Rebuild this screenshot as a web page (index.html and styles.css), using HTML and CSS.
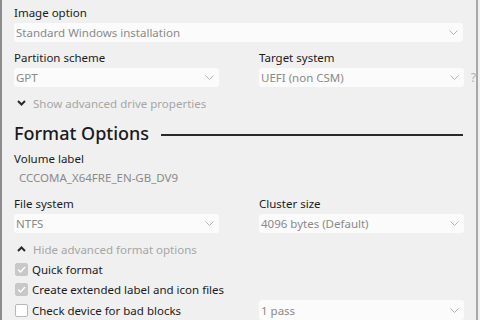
FILE: index.html
```html
<!DOCTYPE html>
<html lang="en">
  <head>
    <meta charset="UTF-8" />
    <meta name="viewport" content="width=device-width, initial-scale=1.0" />
    <title>Drive Properties</title>
    <link rel="stylesheet" href="styles.css">
  </head>
  <body>
    <div class="window">
      <div class="label first">Image option</div>
      <div class="select">
        <span>Standard Windows installation</span>
        <svg class="chev" width="9" height="5" viewBox="0 0 9 5"><path d="M0.5 0.5 L4.5 4.5 L8.5 0.5" /></svg>
      </div>

      <div class="row gap7">
        <div class="col">
          <div class="label">Partition scheme</div>
          <div class="select">
            <span>GPT</span>
            <svg class="chev" width="9" height="5" viewBox="0 0 9 5"><path d="M0.5 0.5 L4.5 4.5 L8.5 0.5" /></svg>
          </div>
        </div>
        <div class="col">
          <div class="label">Target system</div>
          <div class="select-wrap">
            <div class="select">
              <span>UEFI (non CSM)</span>
              <svg class="chev" width="9" height="5" viewBox="0 0 9 5"><path d="M0.5 0.5 L4.5 4.5 L8.5 0.5" /></svg>
            </div>
            <span class="help">?</span>
          </div>
        </div>
      </div>

      <div class="toggle toggle-drive">
        <svg class="caret" width="9" height="6" viewBox="0 0 9 6"><path d="M1 1 L4.5 4.5 L8 1" /></svg>
        <span>Show advanced drive properties</span>
      </div>

      <div class="heading">
        <h2>Format Options</h2>
        <div class="rule"></div>
      </div>

      <div class="label vol">Volume label</div>
      <div class="value">CCCOMA_X64FRE_EN-GB_DV9</div>

      <div class="row gap9">
        <div class="col">
          <div class="label">File system</div>
          <div class="select">
            <span>NTFS</span>
            <svg class="chev" width="9" height="5" viewBox="0 0 9 5"><path d="M0.5 0.5 L4.5 4.5 L8.5 0.5" /></svg>
          </div>
        </div>
        <div class="col">
          <div class="label">Cluster size</div>
          <div class="select">
            <span>4096 bytes (Default)</span>
            <svg class="chev" width="9" height="5" viewBox="0 0 9 5"><path d="M0.5 0.5 L4.5 4.5 L8.5 0.5" /></svg>
          </div>
        </div>
      </div>

      <div class="toggle toggle-format">
        <svg class="caret" width="9" height="6" viewBox="0 0 9 6"><path d="M1 5 L4.5 1.5 L8 5" /></svg>
        <span>Hide advanced format options</span>
      </div>

      <div class="check first-check">
        <span class="box checked"><svg width="9" height="7" viewBox="0 0 9 7"><path d="M1 3.5 L3.5 6 L8 1" /></svg></span>
        <span>Quick format</span>
      </div>
      <div class="check">
        <span class="box checked"><svg width="9" height="7" viewBox="0 0 9 7"><path d="M1 3.5 L3.5 6 L8 1" /></svg></span>
        <span>Create extended label and icon files</span>
      </div>
      <div class="row last-row">
        <div class="col">
          <div class="check plain">
            <span class="box"></span>
            <span>Check device for bad blocks</span>
          </div>
        </div>
        <div class="col">
          <div class="select">
            <span>1 pass</span>
            <svg class="chev" width="9" height="5" viewBox="0 0 9 5"><path d="M0.5 0.5 L4.5 4.5 L8.5 0.5" /></svg>
          </div>
        </div>
      </div>
    </div>
  </body>
</html>
```

FILE: styles.css
```css
body {
  margin: 0;
  background-color: #f0f0f0;
  font-family: "Noto Sans", "Open Sans", sans-serif;
  font-size: 11.5px;
  color: #1b1b1b;
  overflow: hidden;
}
.window {
  width: 478px;
  height: 320px;
  box-sizing: border-box;
  border-left: 2px solid #8c8c8c;
  border-right: 2px solid #a8a8a8;
  padding: 5px 13px 0 12px;
  overflow: hidden;
}
.label {
  height: 16px;
  line-height: 16px;
  margin-bottom: 2px;
}
.select {
  height: 19px;
  background-color: #fbfbfb;
  border-radius: 3px;
  display: flex;
  align-items: center;
  justify-content: space-between;
  padding: 0 5px 0 2px;
  color: #8a8a8a;
  box-sizing: border-box;
}
.chev path {
  fill: none;
  stroke: #b4b4b4;
  stroke-width: 1;
}
.row {
  display: grid;
  grid-template-columns: 205px 205px;
  column-gap: 40px;
}
.col {
  min-width: 0;
}
.gap7 {
  margin-top: 8px;
}
.gap9 {
  margin-top: 10px;
}
.select-wrap {
  position: relative;
}
.help {
  position: absolute;
  right: -12px;
  top: 1px;
  color: #b0b0b0;
  font-size: 12px;
}
.toggle {
  display: flex;
  align-items: center;
  height: 16px;
  color: #a6a6a6;
}
.toggle-drive {
  margin-top: 8px;
}
.toggle-format {
  margin-top: 8px;
}
.caret {
  margin: 0 7px 0 3px;
}
.caret path {
  fill: none;
  stroke: #2a2a2a;
  stroke-width: 2;
}
.heading {
  display: flex;
  align-items: center;
  margin-top: 10px;
  height: 24px;
}
.heading h2 {
  margin: 0;
  font-size: 18px;
  font-weight: 500;
  line-height: 24px;
  color: #1a1a1a;
}
.rule {
  flex: 1;
  height: 2px;
  background-color: #2a2a2a;
  margin: 4px 0 0 12px;
}
.vol {
  margin-top: 6px;
}
.value {
  height: 16px;
  line-height: 16px;
  margin-top: 3px;
  padding-left: 5px;
  color: #8a8a8a;
}
.check {
  display: flex;
  align-items: center;
  height: 16px;
  margin-top: 4px;
}
.first-check {
  margin-top: 4px;
}
.box {
  width: 11px;
  height: 11px;
  border: 1px solid #b8b8b8;
  border-radius: 2px;
  background-color: #ffffff;
  margin: 0 4px 0 1px;
  display: flex;
  align-items: center;
  justify-content: center;
}
.box.checked {
  background-color: #c8c8c8;
  border-color: #c8c8c8;
}
.box path {
  fill: none;
  stroke: #ffffff;
  stroke-width: 1.3;
}
.last-row {
  margin-top: 3px;
  align-items: center;
}
.check.plain {
  margin-top: 0;
}
.last-row .select {
  height: 20px;
}
```
